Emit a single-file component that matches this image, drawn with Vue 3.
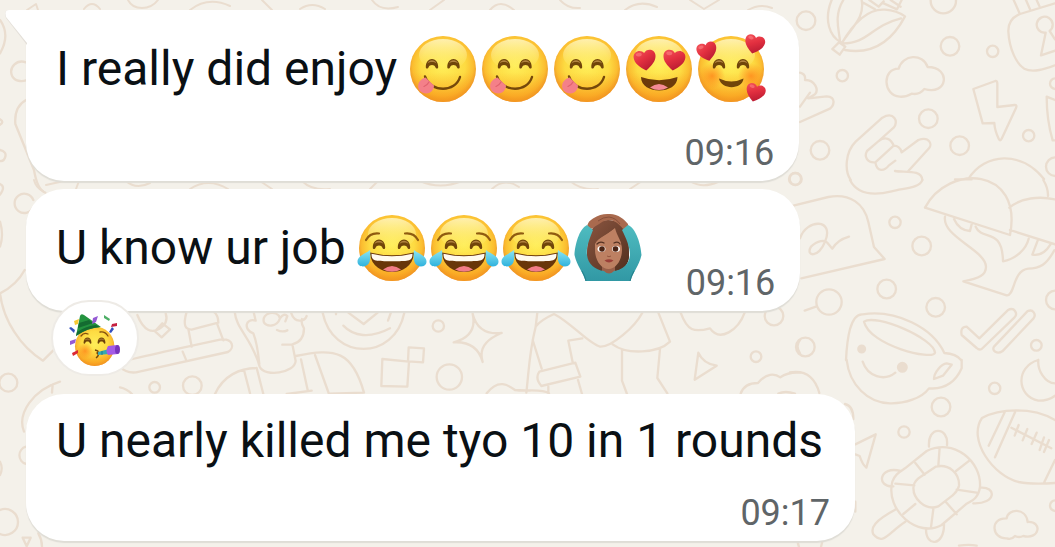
<template>
  <main class="chat">
    <svg class="wallpaper" viewBox="0 0 1055 547" preserveAspectRatio="xMinYMin slice" aria-hidden="true">
      <!-- top edge and the strip between the first bubbles -->
      <g class="thin">
        <path d="M27 10l9-6 2 6M84 9q8-10 16 0M128 0q4 8 14 8t16-8M190 10q18-14 40-4M262 0l10 10M300 9q12-8 25 0M372 0q8 12 26 7M430 10l14-10M490 10q10-12 24 0M560 0q8 9 20 8M625 10q14-11 32-3M690 0l14 9 15-9M748 10q12-7 24-2" />
        <path d="M34 180q2 8 9 11M46 185l18-4M79 181l-3 8M126 181q10 9 24 2M190 189q18-12 38 0M260 181l12 8M302 181q10 10 28 8M370 189l8-8M420 181q20 9 42 0M492 189q12-12 27-2M570 181q12 10 28 8M630 189l12-8M690 181q12 8 28 1" />
      </g>
      <g transform="scale(.33333)">
        <path d="M0 60q32 45 0 100M78 187c-28-10-52 15-42 40 8 18 30 18 42 14M78 300q-36 20-32 72l56 138q10 60 34 68M0 358q14 8 0 16M0 450q20 5 16 20T0 483M0 552q18 8 0 32M100 600a29 29 0 1 0 0 20M0 665q12 40 0 75" />
      </g>
      <g transform="translate(0 270) scale(.33333)">
        <path d="M74 0Q50 45 0 70c10 80 60 160 129 202l34-34M180 335c-80 25-130 95-108 150M158 343l-2 25M78 530a27 27 0 0 0 0 52M0 575q10 20 0 40M0 720a39 39 0 1 1 0 72M68 803h24l-12 26zM115 790q14 24 10 50" />
        <circle cx="25" cy="338" r="27" />
      </g>
      <g transform="translate(790) scale(.33333)">
        <circle cx="48" cy="62" r="28" /><circle cx="157" cy="227" r="17" />
        <circle cx="460" cy="2" r="38" /><circle cx="480" cy="139" r="28" />
        <circle cx="608" cy="154" r="17" /><circle cx="415" cy="356" r="28" />
        <circle cx="509" cy="437" r="28" /><circle cx="716" cy="407" r="17" />
        <circle cx="90" cy="451" r="28" /><circle cx="17" cy="537" r="18" />
        <circle cx="796" cy="251" r="16" /><circle cx="796" cy="500" r="28" />
        <path d="M125 0c-25 60-5 110 27 126M160 0c-30 50-12 90-10 125M215 0c10 55-30 80-60 130 35-60 80-105 130-101 25 2 40 6 60 20-42 80-100 115-180 101M155 130c80 2 85-52 178-75M147 127l-20 20 22 17 17-24zM220 8l35 20M238 0l28 20 15-16M281 10l40 18 14-28M302 0l30 20" />
        <path d="M326 206c-50 0-48 80 3 84 15 2 25-3 36-9 18 4 28-2 38-14 70 22 82-66 10-66-15-42-75-38-87 5zM550 267l66-24q6-1 6 8v70l52-6q8 0 4 9l-43 92q-4 10-9 0-12-25-13-47l-35 1zM795 300l-25-10q0 70 18 131h7" />
        <path d="M671 0l17 38M708 0l12 28M740 0l8 18M795 10L690 42q-36 15-35 52c3 55 25 98 48 112 25 14 64 0 92-10M767 98a24 24 0 1 1 12-5l16 25M767 98l-14 68 42-14" />
        <path d="M30 218q18 4 15 22c30-1 42 30 30 43l-20 12 55-6c30 1 24 32 3 40L30 366M30 320l30-42M182 540c-20-30-15-85 15-115l80-72c35-20 50 12 34 30l-45 40-35 30c-10 18 2 34 20 34M266 423c20-15 37-7 45 14 12 0 20 5 24 20l50-37c35-12 42 15 32 25l-62 68M311 437l-55 50c5 30 27 27 40 10l20-15M315 513c30 5 80-5 82 27M535 537c50-80 160-85 227 0M495 538h50" />
      </g>
      <g transform="translate(790 180) scale(.33333)">
        <circle cx="315" cy="127" r="17" /><circle cx="395" cy="198" r="28" />
        <circle cx="290" cy="327" r="28" /><circle cx="437" cy="382" r="28" />
        <circle cx="117" cy="366" r="38" /><circle cx="46" cy="501" r="28" />
        <circle cx="739" cy="496" r="16" /><circle cx="796" cy="360" r="28" />
        <circle class="dot" cx="215" cy="507" r="10" /><circle cx="15" cy="-3" r="18" />
        <path d="M10 77l105-26c65-12 108 20 120 75l17 75 32 36-250 58M30 175c20-60 105-60 75 10-18 50-60 45-42 15 20-20 42-20 49-12l15 18q15-26 50-36M44 392l34-12M180 0c25 50 80 45 125 34 40-10 85-10 92-34" />
        <path d="M405 83C475-50 700-40 660 165L405 83M658 83c35-30 90-35 137-25M660 150l135 43M760 0q15 25 14 48M465 110c-10 60 122 100 123 150 0 25-20 35-68 44l130 42c25 3 17-75 65-80 35 0 55-13 78-55M492 117q15 34 48 36l5-20M557 140c20 45 80 0 82 104 40-7 70-38 77-68M743 182l-16 42q32 6 54-30" />
        <path d="M168 540c3-60 12-140 50-137 100-15 210 40 245 116q36 2 50 21M222 425c35-25 210 50 213 93-5 24-195-20-213-93zM515 465q-5-25 15-25l38 35 85-84c20-12 32 10 20 22l-98 94q-8 4-15-3zM612 500l100-106c17-9 28 10 18 22l-93 98c-15 10-33-2-25-14z" />
      </g>
      <g transform="translate(790 360) scale(.33333)">
        <circle class="dot" cx="337" cy="22" r="13" /><circle cx="614" cy="85" r="17" />
        <circle cx="453" cy="141" r="28" /><circle cx="342" cy="216" r="17" />
        <circle cx="796" cy="437" r="16" />
        <path d="M170 0c8 75 65 130 130 130 45 1 95-15 117-45 50 4 80-20 98-60V0M218 5c15 45 65 60 98 33M470 10l15 4-26 33-27 10c0-20 22-45 38-47zM0 37c45-7 75 15 88 62M165 132q25 5 25 45M196 253l61-30-28 100q-12-10-20-35l-13-5M22 540q2 12 5 21M98 540l-5 21M196 425v30" />
        <path d="M745 0c-70 20-65 110 0 122 20 0 38-5 50-15M745 0c-3 30 20 70 50 70M576 174c50-28 150-35 219 6M576 174c-45 65 35 175 110 192 35 7 70 6 109 3M644 157l-48 100M677 152l-62 140M795 300l-32 66M664 203l120 62M686 195l-12 32M712 207l-14 34M740 218l-15 34M762 232l-13 38M777 240l-15 36" />
        <path d="M345 325l65-52c80-40 165 30 160 108-5 32-20 39-40 50l-75 64c-70 40-170-42-148-130 8-22 20-28 38-40zM392 350l45-30c40-10 72 20 70 57-3 17-10 20-20 30l-42 32c-40 15-80-25-74-63 3-12 10-19 21-26zM449 263l-4 54M538 302l-40 31M376 309l28 35M316 371l57 5M500 389l60 9M467 425l33 38M430 447l-7 55M376 432l-36 30M417 260c-5-65 60-60 54-5M332 333c-65-18-75 50-22 46M570 383c50-5 50 50-20 47M318 448c-65 35-77 55-68 75 30 35 45-5 96-38M408 508c0 55 55 50 54-15" />
        <path d="M650 475c-52-2-45 62 0 60q15 5 25-7 12 6 25 0c50 12 58-45 13-42-5-45-60-40-63-11zM507 557q30-5 53 0" />
      </g>
      <g transform="translate(120 300) scale(.33333)">
        <path d="M52 45c20 50 45 54 65 42q30-18 20-47M127 70l-22 24 20 18 25-24zM200 35c-14 48 0 52 15 54l22-6 58-15q0-22-14-33M205 87l10 53M292 73l18 48M0 187q35-11 300-68c40-5 45 25 24 37L48 217q-30 3-48-16M188 155l10 24" />
        <path d="M344 35c5 55 50 75 75 165 15 32 105 20 108-17l-10-50q35-8 35-48-10-15-6-28M400 100c-30-10-25-47 7-38l-6-26M400 100q12 30 18 92M432 68c-10-30 40-42 48-13-10 28-40 25-48 13zM480 55q12-17 22-7l-6 16M514 40c10 30 40 25 46 8M471 90q16 8 31 1M487 134h30M285 282c25-55 75-78 125-78M372 210l18 70M410 204l20 78M527 168c120-25 170-15 205 110l-105 3M543 178l20 92M585 165l42 117M500 282l75-10" />
        <path d="M608 38c30 145 215 145 245 0M648 38v5M685 38l46 34 42-34M670 77c30 32 80 40 140 8M804 62l10-28M787 177l80 8-5 75-78-2zM866 142l46 3-3 42-45-3z" />
        <circle cx="104" cy="262" r="16" /><circle cx="217" cy="257" r="28" />
        <circle cx="955" cy="78" r="17" /><circle cx="988" cy="231" r="38" />
        <path d="M0 262q20 4 36 20" />
      </g>
      <g transform="translate(440 300) scale(.33333)">
        <path d="M98 42q17 65 87 57-75 30-57 87-17-63-87-59 72-19 57-85zM292 38l-5 42q15-20 55-38c50 25 105 90 138 98 35 2 105-60 127-102M287 80c-20 80-20 130-28 198M278 120l27 86M427 115l-42 7 13 65M655 38l35 87c-35 35-130 40-172 8M546 150v92l15 40M660 147l-8 87 30 46M298 215l108-27 15 42-117 28q-20-23-6-43zM414 240l12 42M140 280c35-45 65-25 85-10 40 5 80-5 102 10M325 260v20M722 38c20 55 40 60 88 47 30 43 85 5 104-47M775 158q15 33 55 39l-66 42z" />
        <circle cx="1002" cy="48" r="28" /><circle cx="948" cy="170" r="16" />
        <path d="M1080 120q-15 18 0 40M902 281c10-30 35-32 52-32 25-30 50-30 67-17q25-17 60-14M1015 281q20-10 50 0" />
      </g>
    </svg>

    <svg class="defs" aria-hidden="true">
      <defs>
        <radialGradient id="skin" cx=".5" cy=".45" r=".56">
          <stop offset="0" stop-color="#ffee58" />
          <stop offset=".6" stop-color="#fddb42" />
          <stop offset=".82" stop-color="#fbbd30" />
          <stop offset="1" stop-color="#e58526" />
        </radialGradient>
        <linearGradient id="shine" x2="0" y2="1">
          <stop offset="0" stop-color="#fff6c4" stop-opacity=".85" />
          <stop offset="1" stop-color="#fff07a" stop-opacity="0" />
        </linearGradient>
        <linearGradient id="warm" x2="0" y2="1">
          <stop offset=".55" stop-color="#f99b1c" stop-opacity="0" />
          <stop offset="1" stop-color="#f99b1c" stop-opacity=".7" />
        </linearGradient>
        <linearGradient id="red" x2=".6" y2="1">
          <stop offset="0" stop-color="#f4545b" />
          <stop offset=".5" stop-color="#e33040" />
          <stop offset="1" stop-color="#b91b32" />
        </linearGradient>
        <linearGradient id="tear" x2="0" y2="1">
          <stop offset="0" stop-color="#8ce5f2" />
          <stop offset="1" stop-color="#2fb2dd" />
        </linearGradient>
        <radialGradient id="blush">
          <stop offset="0" stop-color="#ff8a1c" stop-opacity=".85" />
          <stop offset="1" stop-color="#ff8a1c" stop-opacity="0" />
        </radialGradient>
        <linearGradient id="sleeve" x2="0" y2="1">
          <stop offset="0" stop-color="#4fbcc0" />
          <stop offset="1" stop-color="#3198a4" />
        </linearGradient>
        <linearGradient id="hair" x2="1" y2="1">
          <stop offset="0" stop-color="#8a5540" />
          <stop offset="1" stop-color="#53301f" />
        </linearGradient>
      </defs>

      <symbol id="face" viewBox="0 0 72 72">
        <circle cx="36" cy="36" r="33" fill="url(#skin)" />
        <circle cx="36" cy="36" r="33" fill="url(#warm)" />
        <ellipse cx="36" cy="22" rx="24" ry="16" fill="url(#shine)" />
      </symbol>
      <symbol id="eye" viewBox="0 0 14 11">
        <path d="M.8 9C.8-1.8 13.2-1.8 13.2 9c0 2-2.2 2-2.8.2C9.500 6.300 4.500 6.300 3.600 9.200 3 11 .8 11 .8 9z" fill="#70450a" />
        <path d="M2.500 5.500C4 1.200 10 1.200 11.500 5.500 9 3.600 5 3.600 2.500 5.500z" fill="#b0823f" />
      </symbol>
      <symbol id="heart" viewBox="0 0 24 22">
        <path d="M12 21.500C6 17.500 1 13 1 7.300 1 .5 9.500-.5 12 4c2.500-4.500 11-3.500 11 3.300 0 5.700-5 10.200-11 14.200z" fill="url(#red)" />
        <ellipse cx="6.500" cy="5" rx="3" ry="1.800" fill="#ff8c8e" opacity=".5" />
      </symbol>

      <symbol id="yum" viewBox="0 0 72 72">
        <use href="#face" />
        <use href="#eye" x="18" y="25" width="14" height="11" />
        <use href="#eye" x="39.500" y="25" width="14" height="11" />
        <path d="M18 43.500c6 16.500 30.500 16 35 .5" fill="none" stroke="#75480b" stroke-width="2.400" stroke-linecap="round" />
        <path d="M18.500 44.500l8.500 8c0 4-3 8-7.500 8-5.500 0-9-4-8.300-8.500.6-4 3.800-6.500 7.300-7.500z" fill="#f48089" />
        <path d="M17 53.500q3.500-1.500 5-4.500" fill="none" stroke="#e0626f" stroke-width="1.200" stroke-linecap="round" />
      </symbol>
      <symbol id="love" viewBox="0 0 72 72">
        <use href="#face" />
        <use href="#heart" x="10" y="16" width="24" height="22" transform="rotate(-7 22 27)" />
        <use href="#heart" x="39" y="16" width="24" height="22" transform="rotate(7 51 27)" />
        <path d="M18 44q18 6.500 36.500 0c0 18-36.500 18-36.500 0z" fill="#6d3b0b" />
        <path d="M27 54.500q9-7 18 0-9 5-18 0z" fill="#f58b96" />
      </symbol>
      <symbol id="adore" viewBox="0 0 72 72">
        <use href="#face" />
        <circle cx="17" cy="43" r="13" fill="url(#blush)" />
        <circle cx="56" cy="43" r="13" fill="url(#blush)" />
        <use href="#eye" x="17" y="25" width="14" height="11" />
        <use href="#eye" x="41" y="25" width="14" height="11" />
        <path d="M24 45.500q12.500 6 24.500 0c-1 11.500-22.500 11.500-24.500 0z" fill="#70450a" />
        <use href="#heart" x="1" y="8.500" width="22" height="20" transform="rotate(-14 12 18)" />
        <use href="#heart" x="48.500" y="1" width="22" height="20" transform="rotate(14 59 11)" />
        <use href="#heart" x="50" y="49.500" width="21" height="20" transform="rotate(16 60 59)" />
      </symbol>
      <symbol id="joy" viewBox="0 0 72 72">
        <use href="#face" />
        <path d="M10 28q4-7.500 13-6.500M62 28q-4-7.500-13-6.500" fill="none" stroke="#8f5b10" stroke-width="2.200" stroke-linecap="round" />
        <use href="#eye" x="16" y="26.500" width="14" height="11" />
        <use href="#eye" x="41" y="26.500" width="14" height="11" />
        <path d="M14 40.500q22 5.500 44 0c-1 26-43 26-44 0z" fill="#693609" />
        <path d="M15.500 41.800q20.500 5 41 0c0 8.500-5 7-20.500 7.500-15.500-.5-20.500 1-20.500-7.500z" fill="#fffaf0" />
        <path d="M27 57.500q9-7 18 0-9 4.500-18 0z" fill="#f27d88" />
        <path id="drop" d="M14 38c-5 4-12.500 6-12.500 11.500 0 6.500 10 6.500 12 .5 1-3 1-8 .5-12z" fill="url(#tear)" />
        <use href="#drop" transform="matrix(-1 0 0 1 72 0)" />
      </symbol>
      <symbol id="okwoman" viewBox="0 0 72 72">
        <path d="M24 60q12-6 24 0v9H24z" fill="#945b43" />
        <path d="M36 8C18 8 15 27 15 44c0 8 6 14 13 15h16c8-1 13-7 13-15 0-19-4-36-21-36z" fill="url(#hair)" />
        <path d="M30 53h13v9q-6 5-13 0z" fill="#99604a" />
        <path d="M23 31c3-6 11-8 20-15 2 9 7 12 7 22 0 10-6 19-13.500 19S23 48 23 38z" fill="#bd8062" />
        <path d="M43 15c-8 9-17 10-20 17-3 5-1 18 4 25C14 56 14 47 15.500 37 17 19 24 9 36 9c17 0 21 15 21 33 0 9-5 14-12 15 8-9 7-27-2-42z" fill="url(#hair)" />
        <path d="M17 18C14 15 15 10 21 6.500c6-4 11-5 17-4.500 8 0 15 6 18 10 1 4-2 6-4 6-4-5-8-9-14-10-8 0-11 5-21 10z" fill="#a96a4e" />
        <path d="M26 9q5-4 11-4 7 1 11 7" fill="none" stroke="#87503b" />
        <path d="M15 13l6 5C17 28 14 36 15 43c1 9 8 15 17 16q5 5 10 0c9-1 15-7 16-16 0-8-4-17-8-25l6-5c8 3 13 20 13.500 30C67 54 61 60 58.500 69h-45C11 60 5 54 2.500 43 3 33 7 17 15 13z" fill="url(#sleeve)" />
        <path d="M14 69q-1-5-4-10M58 69q1-5 4-10" fill="none" stroke="#237f8a" />
        <g fill="none" stroke="#533022" stroke-width="1.300" stroke-linecap="round">
          <path d="M25 32q3-3 7-1M42 31q4-2 6 1" />
        </g>
        <ellipse cx="29.500" cy="37" rx="4" ry="3" fill="#fff" />
        <ellipse cx="44" cy="37" rx="4" ry="3" fill="#fff" />
        <circle cx="30" cy="37" r="2.800" fill="#4c2415" />
        <circle cx="43.500" cy="37" r="2.800" fill="#4c2415" />
        <path d="M35 44q2 1.500 4 0" fill="none" stroke="#95573f" />
        <path d="M32.500 48.500q4.500-2.500 9 0-4.500 4-9 0z" fill="#9b3f38" />
      </symbol>
      <symbol id="party" viewBox="0 -4 60 60">
        <circle cx="29.700" cy="34.300" r="19.700" fill="url(#skin)" />
        <circle cx="29.700" cy="34.300" r="19.700" fill="url(#warm)" />
        <circle cx="20" cy="39" r="8" fill="url(#blush)" />
        <path d="M11 24L15 4q1-3 4-1l17 12Q22 16 11 24z" fill="#24933f" />
        <path d="M14 11l10-3 4 3-15 5zM12 20q9-6 19-7l4 2Q22 16 11 24z" fill="#146b31" />
        <path d="M16 24q3-4 7-2M35 20q5-1 8 4" fill="none" stroke="#83500d" stroke-width="1.300" stroke-linecap="round" />
        <use href="#eye" x="18" y="25" width="9" height="7" />
        <use href="#eye" x="32" y="25" width="9" height="7" />
        <path d="M30 38q5 1 2 3 3 2-1 5" fill="none" stroke="#70450a" stroke-width="1.400" />
        <path d="M33 40l11-3v5l-11 1z" fill="#35a9b2" />
        <path d="M37 39v4" stroke="#1d7890" />
        <path d="M43 34l9-1q4 4 1 9l-10 1q-3-4 0-9z" fill="#a45be6" />
        <ellipse cx="52.500" cy="37.500" rx="2.500" ry="4.500" fill="#7735bd" />
        <path d="M28 6l5-2-2 6-4 2zM5 29l6-2-1 4-5 2z" fill="#955ad4" />
        <path d="M39 3l6 4-1 2-5-3z" fill="#4cae65" />
        <path d="M47 12l5-1v3l-6 1z" fill="#c62040" />
        <path d="M4 16l5 5 1-3-4-3zM44 20l3-5 2 2-3 4z" fill="#3550bd" />
        <path d="M7 41l6-3v3l-5 3z" fill="#dc2734" />
        <path d="M9 9l5-2-1 5-3 1z" fill="#f7c934" />
      </symbol>
    </svg>

    <template v-for="message in messages" :key="message.id">
      <article class="bubble" :class="{ first: message.first, inline: message.inline }">
        <svg v-if="message.first" class="tail" viewBox="0 0 22 36" aria-hidden="true">
          <path d="M22 0H4Q-2 1 1 8L22 35z" fill="#e3dfd8" />
          <path d="M22 0H4Q-1 0 1 7L22 33z" fill="#fff" />
        </svg>
        <p class="line" :class="{ tall: message.emojis.length }">
          <span>{{ message.text }}</span>
          <span v-if="message.emojis.length" class="emojis">
            <svg v-for="(emoji, i) in message.emojis" :key="i" class="emoji" role="img" :aria-label="labels[emoji]">
              <use :href="'#' + emoji" />
            </svg>
          </span>
        </p>
        <time class="time">{{ message.time }}</time>
      </article>
      <button v-if="message.reaction" class="reaction" type="button" :aria-label="labels[message.reaction]">
        <svg class="reaction-icon" aria-hidden="true"><use :href="'#' + message.reaction" /></svg>
      </button>
    </template>
  </main>
</template>

<script setup>
const labels = {
  yum: 'Face savoring food',
  love: 'Smiling face with heart eyes',
  adore: 'Smiling face with hearts',
  joy: 'Face with tears of joy',
  okwoman: 'Woman gesturing OK',
  party: 'Partying face'
};

const messages = [
  {
    id: 1,
    text: 'I really did enjoy',
    emojis: ['yum', 'yum', 'yum', 'love', 'adore'],
    time: '09:16',
    first: true
  },
  {
    id: 2,
    text: 'U know ur job',
    emojis: ['joy', 'joy', 'joy', 'okwoman'],
    time: '09:16',
    inline: true,
    reaction: 'party'
  },
  {
    id: 3,
    text: 'U nearly killed me tyo 10 in 1 rounds',
    emojis: [],
    time: '09:17'
  }
];
</script>

<style>
body {
  background: #f4f1ea;
}
</style>

<style scoped>
.chat {
  position: relative;
  box-sizing: border-box;
  min-height: 100vh;
  padding: 10px 26px 6px;
  display: flex;
  flex-direction: column;
  align-items: flex-start;
  gap: 8px;
  overflow: hidden;
  font-family: Roboto, sans-serif;
  color: #0a1014;
}

.wallpaper {
  position: absolute;
  inset: 0;
  width: 100%;
  height: 100%;
  fill: none;
  stroke: #eaddcf;
  stroke-width: 7;
  stroke-linecap: round;
  stroke-linejoin: round;
}

.thin {
  stroke-width: 2;
}

.dot {
  fill: #eaddcf;
}

.defs {
  position: absolute;
  width: 0;
  height: 0;
}

.bubble {
  position: relative;
  display: flex;
  flex-direction: column;
  padding: 15px 32px 0 30px;
  border-radius: 38px;
  background: #fff;
  box-shadow: 0 2px 1px #dfddd6;
}

.bubble.first {
  border-top-left-radius: 0;
}

.bubble.inline {
  flex-direction: row;
  gap: 42px;
}

.tail {
  position: absolute;
  top: 0;
  left: -21px;
  width: 22px;
  height: 36px;
}

.line {
  display: flex;
  align-items: center;
  gap: 10px;
  margin: 0 0 19px;
  font-size: 48px;
  line-height: 64px;
}

.line.tall {
  line-height: 88px;
}

.emojis {
  display: flex;
}

.emoji {
  width: 72px;
  height: 72px;
}

.time {
  align-self: flex-end;
  margin: 0 -7px 7px 0;
  font-size: 36px;
  line-height: 42px;
  color: #5f6568;
}

.reaction {
  position: relative;
  display: flex;
  align-items: center;
  justify-content: center;
  width: 88px;
  height: 76px;
  margin: -19px 0 10px 25px;
  padding: 0;
  border: 2px solid #eeebe6;
  border-radius: 38px;
  background: #fff;
}

.reaction-icon {
  width: 60px;
  height: 60px;
}
</style>
